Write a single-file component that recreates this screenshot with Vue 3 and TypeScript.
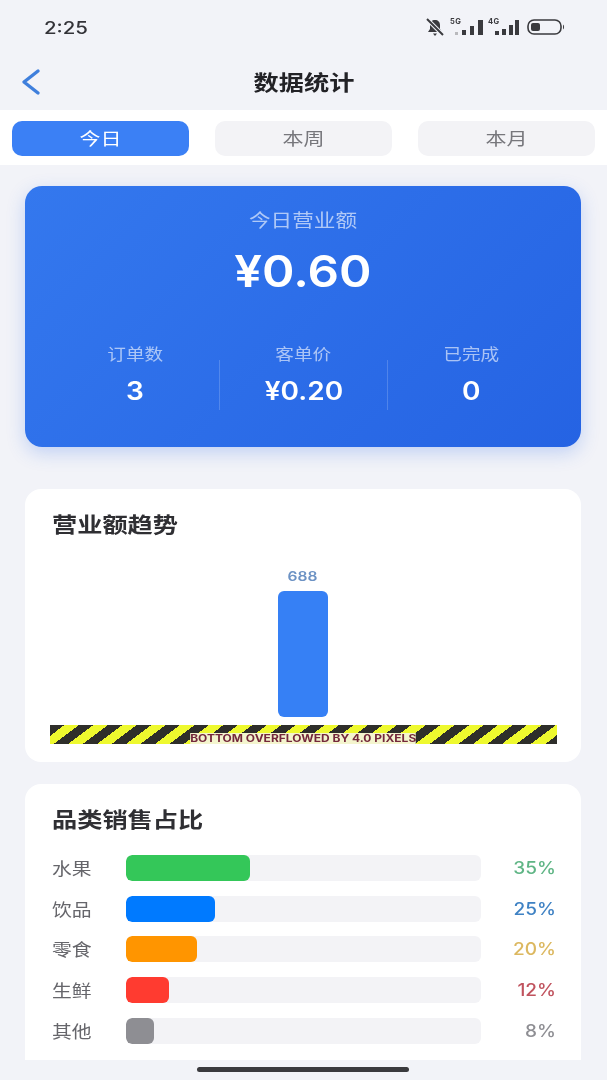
<script setup lang="ts">
import { ref } from 'vue';

const tabs = ['今日', '本周', '本月'];
const activeTab = ref(0);

const stats = [
  { label: '订单数', value: '3' },
  { label: '客单价', value: '¥0.20' },
  { label: '已完成', value: '0' },
];

const categories = [
  { name: '水果', pct: 35, color: '#34c759', text: '#5fb585' },
  { name: '饮品', pct: 25, color: '#007aff', text: '#3f82c4' },
  { name: '零食', pct: 20, color: '#ff9500', text: '#dcb860' },
  { name: '生鲜', pct: 12, color: '#ff3b30', text: '#c0535e' },
  { name: '其他', pct: 8, color: '#8e8e93', text: '#8e8e93' },
];
</script>

<template>
  <div class="page">
    <div class="status">
      <span class="status__time">2:25</span>
      <div class="status__icons">
        <svg class="bell" width="20" height="19" viewBox="0 0 20 19">
          <path d="M10 2c-3 0-5 2-5 5v4l-2 3h14l-2-3V7c0-3-2-5-5-5z" fill="#3a3a3e" />
          <path d="M8 15.500h4l-2 2.500z" fill="#3a3a3e" />
          <path d="M2 1l16 16" stroke="#f2f3f8" stroke-width="4" />
          <path d="M2 1l16 16" stroke="#3a3a3e" stroke-width="2" />
        </svg>
        <div class="signal">
          <span class="signal__tag">5G</span>
          <svg width="29" height="15" viewBox="0 0 29 15">
            <rect x="0" y="12" width="3" height="3" fill="#b9b9bd" />
            <rect x="7" y="10" width="4" height="5" fill="#3a3a3e" />
            <rect x="15" y="6" width="4" height="9" fill="#3a3a3e" />
            <rect x="23" y="0" width="5" height="15" fill="#3a3a3e" />
          </svg>
        </div>
        <div class="signal signal--second">
          <span class="signal__tag">4G</span>
          <svg width="25" height="15" viewBox="0 0 25 15">
            <rect x="0" y="11" width="4" height="4" fill="#3a3a3e" />
            <rect x="7" y="9" width="4" height="6" fill="#3a3a3e" />
            <rect x="14" y="5" width="4" height="10" fill="#3a3a3e" />
            <rect x="20" y="0" width="4" height="15" fill="#3a3a3e" />
          </svg>
        </div>
        <svg class="battery" width="38" height="16" viewBox="0 0 38 16">
          <rect x="1" y="1" width="33" height="14" rx="6" fill="none" stroke="#3a3a3e" stroke-width="1.600" />
          <rect x="4" y="4" width="9" height="8" rx="2" fill="#3a3a3e" />
          <path d="M36 5.500c1.400 .8 1.400 4.200 0 5z" fill="#3a3a3e" />
        </svg>
      </div>
    </div>

    <header class="nav">
      <svg class="nav__back" width="24" height="28" viewBox="0 0 24 28">
        <path d="M20 3L6 14l14 11" fill="none" stroke="#3f7fdc" stroke-width="3.400" stroke-linecap="round" stroke-linejoin="round" />
      </svg>
      <h1 class="nav__title">数据统计</h1>
    </header>

    <div class="tabs">
      <button
        v-for="(tab, i) in tabs"
        :key="tab"
        type="button"
        class="tabs__item"
        :class="{ 'tabs__item--active': activeTab === i }"
        @click="activeTab = i"
      >
        <span class="tabs__text">{{ tab }}</span>
      </button>
    </div>

    <main class="content">
      <section class="hero">
        <p class="hero__label">今日营业额</p>
        <p class="hero__amount">¥0.60</p>
        <div class="hero__stats">
          <div v-for="stat in stats" :key="stat.label" class="hero__stat">
            <span class="hero__stat-label">{{ stat.label }}</span>
            <span class="hero__stat-value">{{ stat.value }}</span>
          </div>
        </div>
      </section>

      <section class="card card--trend">
        <h2 class="card__title">营业额趋势</h2>
        <div class="chart">
          <span class="chart__value">688</span>
          <div class="chart__bar"></div>
        </div>
        <div class="overflow">
          <span class="overflow__text">BOTTOM OVERFLOWED BY 4.0 PIXELS</span>
        </div>
      </section>

      <section class="card card--share">
        <h2 class="card__title">品类销售占比</h2>
        <div class="share">
          <div v-for="item in categories" :key="item.name" class="share__row">
            <span class="share__name">{{ item.name }}</span>
            <div class="share__track">
              <div class="share__fill" :style="{ width: item.pct + '%', background: item.color }"></div>
            </div>
            <span class="share__pct" :style="{ color: item.text }">{{ item.pct }}%</span>
          </div>
        </div>
      </section>
    </main>

    <div class="home-bar"></div>
  </div>
</template>

<style>
html,
body {
  margin: 0;
  background: #f2f3f8;
}
</style>

<style scoped>
.page {
  position: relative;
  width: 607px;
  height: 1080px;
  overflow: hidden;
  background: #f2f3f8;
  font-family: "Inter", "Noto Sans CJK SC", sans-serif;
  filter: blur(0.6px);
}

/* text in the design runs about 20% wider than tall */
.status__time,
.nav__title,
.tabs__text,
.hero__label,
.hero__stat-label,
.card__title,
.chart__value,
.overflow__text,
.share__name {
  transform: scaleX(1.2);
}

/* digits are stretched a bit less */
.hero__amount,
.hero__stat-value,
.share__pct {
  transform: scaleX(1.12);
}

.status {
  height: 55px;
  padding: 0 42px 0 44px;
  box-sizing: border-box;
  display: flex;
  align-items: center;
  justify-content: space-between;
}

.status__time {
  font-size: 17px;
  font-weight: 500;
  color: #333338;
  transform-origin: left center;
}

.status__icons {
  display: flex;
  align-items: center;
}

.bell {
  margin-right: 3px;
}

.signal {
  position: relative;
  margin-left: 7px;
  display: flex;
}

.signal--second {
  margin-left: 11px;
}

.signal__tag {
  position: absolute;
  left: -5px;
  top: -3px;
  font-size: 7.500px;
  line-height: 9px;
  font-weight: 700;
  letter-spacing: 0.500px;
  color: #3a3a3e;
}

.signal--second .signal__tag {
  left: -7px;
}

.battery {
  margin-left: 7px;
  margin-top: -1px;
}

.nav {
  height: 55px;
  position: relative;
  display: flex;
  align-items: center;
  justify-content: center;
}

.nav__back {
  position: absolute;
  left: 18px;
  top: 13px;
}

.nav__title {
  margin: 0;
  font-size: 21px;
  line-height: 30px;
  font-weight: 700;
  color: #222226;
}

.tabs {
  height: 55px;
  padding: 11px 12px 9px;
  box-sizing: border-box;
  background: #ffffff;
  display: grid;
  grid-template-columns: repeat(3, 177px);
  justify-content: space-between;
}

.tabs__item {
  border: none;
  padding: 0 0 2px;
  border-radius: 10px;
  background: #f3f3f6;
  color: #77777c;
  font-family: inherit;
  font-size: 17.500px;
  cursor: pointer;
}

.tabs__text {
  display: inline-block;
}

.tabs__item--active {
  background: #3b80f5;
  color: #ffffff;
}

.content {
  padding: 21px 26px 0 25px;
}

.hero {
  height: 261px;
  box-sizing: border-box;
  padding: 25px 26px 0;
  border-radius: 17px;
  background: linear-gradient(135deg, #3478ee, #2563e3);
  box-shadow: 0 6px 18px rgba(50, 110, 235, 0.25);
  text-align: center;
}

.hero__label {
  margin: 0;
  font-size: 18px;
  line-height: 20px;
  color: rgba(255, 255, 255, 0.62);
}

.hero__amount {
  margin: 15px 0 0;
  font-size: 44px;
  line-height: 50px;
  font-weight: 600;
  color: #ffffff;
}

.hero__stats {
  margin-top: 64px;
  display: grid;
  grid-template-columns: repeat(3, 1fr);
}

.hero__stat {
  display: flex;
  flex-direction: column;
  align-items: center;
  height: 50px;
  gap: 12px;
}

.hero__stat + .hero__stat {
  border-left: 1px solid rgba(255, 255, 255, 0.18);
}

.hero__stat-label {
  margin-top: -15px;
  font-size: 15.500px;
  line-height: 20px;
  color: rgba(255, 255, 255, 0.6);
}

.hero__stat-value {
  font-size: 25px;
  line-height: 28px;
  font-weight: 600;
  color: #ffffff;
}

.card {
  margin-top: 42px;
  padding: 0 24px 0 25px;
  border-radius: 16px;
  background: #ffffff;
  box-sizing: border-box;
}

.card--trend {
  height: 273px;
  padding-top: 23px;
}

.card--trend .card__title {
  margin-left: 2px;
}

.card--share {
  margin-top: 22px;
  height: 276px;
  padding: 23px 25px 0 27px;
  border-radius: 16px 16px 0 0;
}

.card__title {
  margin: 0;
  font-size: 21px;
  line-height: 26px;
  font-weight: 700;
  color: #2f2f33;
  transform-origin: left center;
}

.chart {
  height: 167px;
  margin-top: 12px;
  padding-right: 2px;
  display: flex;
  flex-direction: column;
  align-items: center;
  justify-content: flex-end;
}

.chart__value {
  font-size: 13px;
  line-height: 16px;
  font-weight: 600;
  color: #6c92c4;
}

.chart__bar {
  margin-top: 7px;
  width: 50px;
  height: 126px;
  border-radius: 6px;
  background: #3680f5;
}

.overflow {
  margin-top: 8px;
  height: 19px;
  display: flex;
  justify-content: center;
  background: repeating-linear-gradient(143deg, #2e2e2a 0 8.700px, #eef92e 8.700px 17.400px);
}

.overflow__text {
  margin-top: 8px;
  height: 11px;
  font-size: 10px;
  line-height: 11px;
  font-weight: 700;
  white-space: nowrap;
  color: #74283c;
  background: #f4f5ce;
}

.share {
  margin-top: 22px;
  display: flex;
  flex-direction: column;
  gap: 14.700px;
}

.share__row {
  display: grid;
  grid-template-columns: 74px 355px 1fr;
  align-items: center;
  height: 26px;
}

.share__name {
  font-size: 16.500px;
  color: #66666b;
  transform-origin: left center;
}

.share__track {
  height: 26px;
  border-radius: 6px;
  background: #f3f3f6;
  overflow: hidden;
}

.share__fill {
  height: 100%;
  border-radius: 6px;
}

.share__pct {
  text-align: right;
  font-size: 17px;
  font-weight: 500;
  transform-origin: right center;
}

.home-bar {
  position: absolute;
  left: 197px;
  bottom: 8px;
  width: 212px;
  height: 5px;
  border-radius: 3px;
  background: #3a3a3e;
}
</style>
